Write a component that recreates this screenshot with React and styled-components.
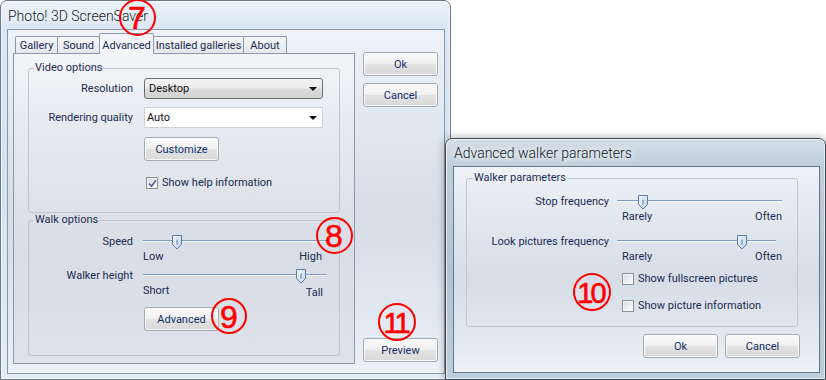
import React from "react";
import styled, { createGlobalStyle } from "styled-components";

const GlobalStyle = createGlobalStyle`
  html, body { margin: 0; padding: 0; background: #ffffff; }
  body {
    font-family: Roboto, "Liberation Sans", Arial, sans-serif;
    font-size: 11px;
    color: #1b2c50;
  }
  * { box-sizing: border-box; }
`;

const Desktop = styled.div`
  position: relative;
  width: 826px;
  height: 380px;
  overflow: hidden;
  background: #ffffff;
`;

const Window = styled.div`
  position: absolute;
  left: ${(p) => p.$x}px;
  top: ${(p) => p.$y}px;
  width: ${(p) => p.$w}px;
  height: ${(p) => p.$h}px;
  display: flex;
  flex-direction: column;
  padding: ${(p) => p.$pad};
  border: 1px solid ${(p) => (p.$active ? "#3f4a56" : "#6b7784")};
  border-radius: 7px 7px 0 0;
  background: ${(p) =>
    p.$active
      ? "linear-gradient(180deg, #d2dde8 0px, #bfcedb 27px, #b2c4d4 55%, #bccddb 100%)"
      : "linear-gradient(180deg, #eaf2fa 0px, #dae7f4 28px, #d4e3f2 50%, #e2edf7 100%)"};
  box-shadow: inset 0 0 0 1px rgba(255, 255, 255, 0.65)
    ${(p) => (p.$active ? ", 0 0 9px rgba(0, 0, 0, 0.35)" : "")};
  z-index: ${(p) => (p.$active ? 2 : 1)};
`;

const TitleBar = styled.div`
  height: ${(p) => p.$h}px;
  flex: none;
  display: flex;
  align-items: center;
  padding: ${(p) => p.$pt}px 0 0 1px;
  font-size: 14px;
  font-weight: 300;
  color: #111a26;
  text-shadow: 0 0 6px #ffffff, 0 0 10px #ffffff, 0 0 14px #ffffff;
  white-space: nowrap;
`;

const Client = styled.div`
  flex: 1;
  display: flex;
  flex-direction: ${(p) => p.$dir || "row"};
  align-items: ${(p) => p.$align || "stretch"};
  padding: ${(p) => p.$pad};
  border: 1px solid ${(p) => p.$edge};
  background: linear-gradient(180deg, #eff3f8 0%, #e0e6ee 30%, #d6dde7 55%, #e2e8f0 82%, #edf2f8 100%);
`;

const TabControl = styled.div`
  width: 342px;
  display: flex;
  flex-direction: column;
`;

const TabStrip = styled.div`
  height: 20px;
  display: flex;
  align-items: flex-end;
  padding-left: 2px;
  position: relative;
  z-index: 1;
`;

const Tab = styled.div`
  width: ${(p) => p.$w}px;
  height: ${(p) => (p.$active ? 21 : 17)}px;
  margin-right: -1px;
  margin-bottom: ${(p) => (p.$active ? -1 : 0)}px;
  display: flex;
  align-items: center;
  justify-content: center;
  padding-top: ${(p) => (p.$active ? 2 : 0)}px;
  border: 1px solid #8c99aa;
  border-bottom: none;
  border-radius: 2px 2px 0 0;
  background: ${(p) =>
    p.$active ? "#f2f4f7" : "linear-gradient(180deg, #f6f7f9, #e3e7ec)"};
  position: relative;
  z-index: ${(p) => (p.$active ? 2 : 0)};
  white-space: nowrap;
`;

const TabPanel = styled.div`
  height: 311px;
  display: flex;
  flex-direction: column;
  padding: 7px 14px 0;
  border: 1px solid #8c99aa;
  background: linear-gradient(180deg, #f2f4f7 0%, #e2e6ed 35%, #d8dde6 65%, #dee3ea 100%);
`;

const ButtonColumn = styled.div`
  width: 75px;
  margin-left: 8px;
  display: flex;
  flex-direction: column;
  gap: 7px;
  padding: 19px 0 2px;
`;

const Button = styled.button`
  width: 75px;
  height: 24px;
  flex: none;
  padding: 0;
  margin-top: ${(p) => (p.$push ? "auto" : "0")};
  font: inherit;
  color: #13306a;
  border: 1px solid #a4abb4;
  border-radius: 3px;
  background: linear-gradient(180deg, #fbfbfb 0%, #f0f0f0 48%, #e2e2e2 52%, #d9d9d9 100%);
  box-shadow: inset 0 0 0 1px rgba(255, 255, 255, 0.8);
`;

const Group = styled.fieldset`
  margin: 0 ${(p) => p.$mr || 0}px 0 0;
  padding: ${(p) => p.$pad};
  border: 1px solid #bfc5ce;
  border-radius: 3px;
  min-width: 0;
  display: flex;
  flex-direction: column;
`;

const Legend = styled.legend`
  margin-left: ${(p) => p.$ml}px;
  padding: 0 1px;
  line-height: 14px;
`;

const Row = styled.div`
  display: grid;
  grid-template-columns: ${(p) => p.$label}px auto;
  column-gap: ${(p) => p.$gap}px;
  align-items: center;
  margin-top: ${(p) => p.$mt || 0}px;
  height: ${(p) => (p.$h ? `${p.$h}px` : "auto")};
`;

const Label = styled.span`
  text-align: right;
  white-space: nowrap;
  line-height: 12px;
`;

const Combo = styled.div`
  width: 179px;
  height: 21px;
  display: flex;
  align-items: center;
  padding-left: ${(p) => (p.$raised ? 4 : 2)}px;
  position: relative;
  border: 1px solid ${(p) => (p.$raised ? "#6f6f6f" : "#cdd2d9")};
  border-radius: ${(p) => (p.$raised ? 3 : 1)}px;
  background: ${(p) =>
    p.$raised
      ? "linear-gradient(180deg, #f3f3f3 0%, #ebebeb 48%, #dcdcdc 52%, #d2d2d2 100%)"
      : "#ffffff"};
  color: #111;
  &::after {
    content: "";
    position: absolute;
    right: 5px;
    top: 8px;
    border-left: 4px solid transparent;
    border-right: 4px solid transparent;
    border-top: 4px solid #111;
  }
`;

const SliderBox = styled.div`
  position: relative;
  width: ${(p) => p.$w}px;
  height: 14px;
  margin-left: ${(p) => p.$ml || 0}px;
`;

const Track = styled.div`
  position: absolute;
  left: 0;
  right: 0;
  top: 5px;
  height: 1px;
  background: #7d9cc4;
  box-shadow: 0 1px 0 rgba(255, 255, 255, 0.7);
`;

const ThumbWrap = styled.svg`
  position: absolute;
  top: 0;
`;

const Scale = styled.div`
  width: ${(p) => p.$w}px;
  display: flex;
  justify-content: space-between;
  padding-left: ${(p) => p.$pl || 0}px;
  margin-left: ${(p) => p.$ml || 0}px;
  line-height: 14px;
`;

const CheckLine = styled.label`
  display: flex;
  align-items: center;
  gap: 4px;
  margin-left: ${(p) => p.$ml}px;
  line-height: 14px;
  white-space: nowrap;
`;

const Box = styled.span`
  width: 12px;
  height: 12px;
  flex: none;
  display: flex;
  align-items: center;
  justify-content: center;
  border: 1px solid #8e9196;
  background: linear-gradient(135deg, #d6dae0 0%, #eef0f3 60%, #fbfbfc 100%);
  box-shadow: inset 0 0 0 1px #f4f5f7;
`;

const ButtonRow = styled.div`
  display: flex;
  justify-content: flex-end;
  gap: 7px;
  margin-top: 7px;
`;

const Callout = styled.div`
  position: absolute;
  left: ${(p) => p.$x - p.$d / 2}px;
  top: ${(p) => p.$y - p.$d / 2}px;
  width: ${(p) => p.$d}px;
  height: ${(p) => p.$d}px;
  display: flex;
  align-items: center;
  justify-content: center;
  padding-top: 2px;
  border: 2px solid #ff0000;
  border-radius: 50%;
  color: #ff0000;
  font-family: "Liberation Sans Narrow", "Liberation Sans", Arial, sans-serif;
  font-size: ${(p) => (p.$pair ? 29 : 32)}px;
  letter-spacing: ${(p) => (p.$pair ? "-3px" : "0")};
  text-indent: ${(p) => (p.$pair ? "-3px" : "0")};
  line-height: 1;
  -webkit-text-stroke: 0.6px #ff0000;
  z-index: 10;
`;

const Slider = ({ width, pos, ml }) => (
  <SliderBox $w={width} $ml={ml}>
    <Track />
    <ThumbWrap width="11" height="15" viewBox="0 0 11 15" style={{ left: pos - 5 }}>
      <defs>
        <linearGradient id="thumbFill" x1="0" y1="0" x2="1" y2="1">
          <stop offset="0" stopColor="#f4f8fc" />
          <stop offset="1" stopColor="#bcd1e8" />
        </linearGradient>
      </defs>
      <path d="M0.5 0.5 H9.5 V9.5 L5 14 L0.5 9.5 Z" fill="url(#thumbFill)" stroke="#5b7ca6" />
      <path d="M5 4.5 V9.5" stroke="#5b7ca6" />
    </ThumbWrap>
  </SliderBox>
);

const Check = ({ checked, ml, children }) => (
  <CheckLine $ml={ml}>
    <Box>
      {checked && (
        <svg width="9" height="9" viewBox="0 0 9 9">
          <path d="M1.2 4.6 L3.6 7.2 L7.8 1.2" fill="none" stroke="#4c6089" strokeWidth="1.6" />
        </svg>
      )}
    </Box>
    {children}
  </CheckLine>
);

const tabs = [
  { name: "Gallery", w: 43 },
  { name: "Sound", w: 43 },
  { name: "Advanced", w: 55, active: true },
  { name: "Installed galleries", w: 91 },
  { name: "About", w: 44 },
];

const MainWindow = () => (
  <Window $x={0} $y={0} $w={451} $h={380} $pad="0 5px 5px 6px">
    <TitleBar $h={28} $pt={2}>Photo! 3D ScreenSaver</TitleBar>
    <Client $edge="#8a99ab" $pad="3px 6px 9px 5px">
      <TabControl>
        <TabStrip>
          {tabs.map((t) => (
            <Tab key={t.name} $w={t.w} $active={t.active}>
              {t.name}
            </Tab>
          ))}
        </TabStrip>
        <TabPanel>
          <Group $pad="3px 0 23px">
            <Legend $ml={5}>Video options</Legend>
            <Row $label={104} $gap={11} $h={21}>
              <Label>Resolution</Label>
              <Combo $raised>Desktop</Combo>
            </Row>
            <Row $label={104} $gap={11} $h={21} $mt={8}>
              <Label>Rendering quality</Label>
              <Combo>Auto</Combo>
            </Row>
            <Row $label={104} $gap={11} $mt={9}>
              <span />
              <Button>Customize</Button>
            </Row>
            <Row $label={104} $gap={11} $h={13} $mt={15}>
              <span />
              <Check checked ml={2}>Show help information</Check>
            </Row>
          </Group>
          <Group $pad="8px 0 24px">
            <Legend $ml={5}>Walk options</Legend>
            <Row $label={104} $gap={11} $h={14}>
              <Label>Speed</Label>
              <Slider width={185} pos={34} ml={-1} />
            </Row>
            <Row $label={104} $gap={11} $mt={1}>
              <span />
              <Scale $w={179} $ml={-1}>
                <span>Low</span>
                <span>High</span>
              </Scale>
            </Row>
            <Row $label={104} $gap={11} $h={14} $mt={5}>
              <Label>Walker height</Label>
              <Slider width={184} pos={158} ml={-1} />
            </Row>
            <Row $label={104} $gap={11} $mt={1}>
              <span />
              <Scale $w={180} $ml={-1}>
                <span>Short</span>
                <span style={{ paddingTop: 2 }}>Tall</span>
              </Scale>
            </Row>
            <Row $label={104} $gap={11} $mt={7}>
              <span />
              <Button>Advanced</Button>
            </Row>
          </Group>
        </TabPanel>
      </TabControl>
      <ButtonColumn>
        <Button>Ok</Button>
        <Button>Cancel</Button>
        <Button $push>Preview</Button>
      </ButtonColumn>
    </Client>
  </Window>
);

const WalkerWindow = () => (
  <Window $x={445} $y={138} $w={381} $h={242} $pad="0 5px 6px 7px" $active>
    <TitleBar $h={27} $pt={0}>Advanced walker parameters</TitleBar>
    <Client $edge="#66768a" $dir="column" $pad="4px 19px 14px 12px">
      <Group $pad="10px 0 13px" $mr={2}>
        <Legend $ml={6}>Walker parameters</Legend>
        <Row $label={142} $gap={8} $h={14}>
          <Label>Stop frequency</Label>
          <Slider width={165} pos={26} />
        </Row>
        <Row $label={142} $gap={8} $mt={1}>
          <span />
          <Scale $w={165} $pl={5}>
            <span>Rarely</span>
            <span>Often</span>
          </Scale>
        </Row>
        <Row $label={142} $gap={8} $h={14} $mt={11}>
          <Label>Look pictures frequency</Label>
          <Slider width={159} pos={125} />
        </Row>
        <Row $label={142} $gap={8} $mt={1}>
          <span />
          <Scale $w={165} $pl={5}>
            <span>Rarely</span>
            <span>Often</span>
          </Scale>
        </Row>
        <Row $label={142} $gap={8} $h={14} $mt={8}>
          <span />
          <Check ml={5}>Show fullscreen pictures</Check>
        </Row>
        <Row $label={142} $gap={8} $h={14} $mt={13}>
          <span />
          <Check ml={5}>Show picture information</Check>
        </Row>
      </Group>
      <ButtonRow>
        <Button>Ok</Button>
        <Button>Cancel</Button>
      </ButtonRow>
    </Client>
  </Window>
);

export default function App() {
  return (
    <>
      <GlobalStyle />
      <Desktop>
        <MainWindow />
        <WalkerWindow />
        <Callout $x={137} $y={17} $d={37}>7</Callout>
        <Callout $x={334} $y={235} $d={37}>8</Callout>
        <Callout $x={229} $y={316} $d={36}>9</Callout>
        <Callout $x={592} $y={292} $d={38} $pair>10</Callout>
        <Callout $x={397} $y={322} $d={38} $pair>11</Callout>
      </Desktop>
    </>
  );
}
